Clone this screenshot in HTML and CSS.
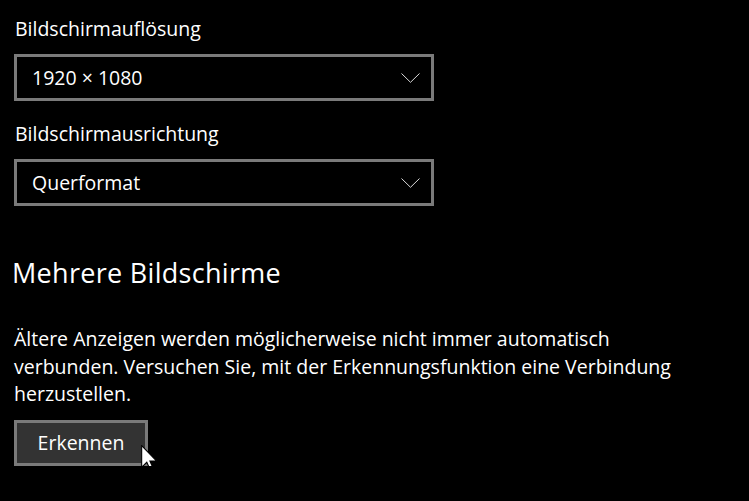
FILE: index.html
```html
<!DOCTYPE html>
<html lang="de">
<head>
  <meta charset="UTF-8">
  <title>Anzeige</title>
  <link rel="stylesheet" href="styles.css">
</head>
<body>
  <div class="settings">
    <div class="field">
      <div class="field-label">Bildschirmauflösung</div>
      <div class="select">
        <span>1920 × 1080</span>
        <svg class="chevron" width="19" height="10" viewBox="0 0 19 10"><path d="M0.5 0.5 L9.5 9.3 L18.5 0.5" fill="none" stroke="#d8d8d8" stroke-width="1"/></svg>
      </div>
    </div>
    <div class="field">
      <div class="field-label">Bildschirmausrichtung</div>
      <div class="select">
        <span>Querformat</span>
        <svg class="chevron" width="19" height="10" viewBox="0 0 19 10"><path d="M0.5 0.5 L9.5 9.3 L18.5 0.5" fill="none" stroke="#d8d8d8" stroke-width="1"/></svg>
      </div>
    </div>

    <h2>Mehrere Bildschirme</h2>
    <p class="info">Ältere Anzeigen werden möglicherweise nicht immer automatisch verbunden. Versuchen Sie, mit der Erkennungsfunktion eine Verbindung herzustellen.</p>

    <div class="button-wrap">
      <button class="detect-button">Erkennen</button>
      <svg class="cursor" width="17" height="27" viewBox="0 0 12.6 20"><path d="M0.5 0.5 L0.5 16.5 L4.3 12.8 L7 18.8 L9.2 17.8 L6.6 11.9 L11.6 11.9 Z" fill="#fff" stroke="#000" stroke-width="0.8" stroke-linejoin="miter"/></svg>
    </div>
  </div>
</body>
</html>
```

FILE: styles.css
```css
* {
  margin: 0;
  padding: 0;
  box-sizing: border-box;
}
body {
  background: #000;
  color: #fff;
  font-family: 'Open Sans', sans-serif;
}
.settings {
  padding: 15px 0 0 14px;
  width: 708px;
}
.field-label {
  font-size: 19.5px;
  line-height: 28px;
  margin-bottom: 11px;
  padding-left: 1px;
}
.select {
  width: 420px;
  height: 47px;
  border: 3px solid #7a7a7a;
  display: flex;
  align-items: center;
  justify-content: space-between;
  padding: 0 11px 0 15px;
  font-size: 19.5px;
}
.field + .field {
  margin-top: 19px;
}
.chevron {
  display: block;
}
h2 {
  font-size: 27px;
  font-weight: 400;
  letter-spacing: 0.3px;
  line-height: 34px;
  margin: 50px 0 0 -2px;
}
.info {
  font-size: 19.5px;
  line-height: 27.5px;
  margin-top: 35px;
}
.button-wrap {
  position: relative;
  margin-top: 12px;
}
.detect-button {
  display: block;
  width: 134px;
  height: 46px;
  background: #333;
  border: 3px solid #7a7a7a;
  color: #fff;
  font-family: 'Open Sans', sans-serif;
  font-size: 19.5px;
}
.cursor {
  position: absolute;
  left: 127px;
  top: 25px;
}
```
